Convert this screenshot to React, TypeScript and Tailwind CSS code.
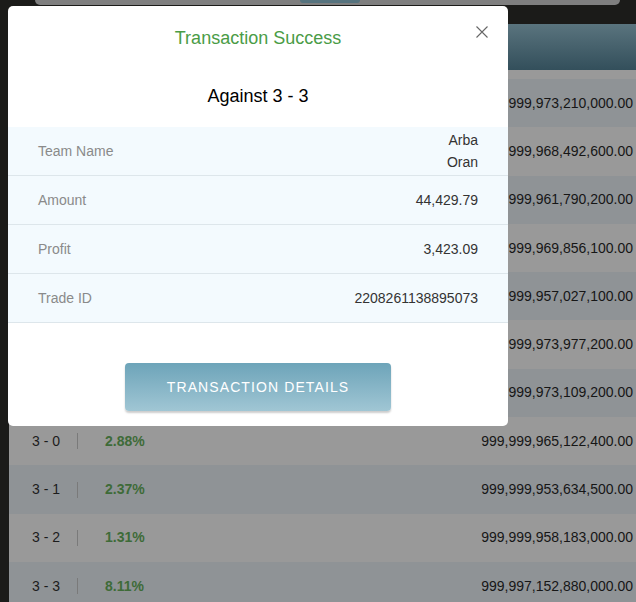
import React from "react";

const rows = [
  { s: "", p: "", v: "999,999,973,210,000.00" },
  { s: "", p: "", v: "999,999,968,492,600.00" },
  { s: "", p: "", v: "999,999,961,790,200.00" },
  { s: "", p: "", v: "999,999,969,856,100.00" },
  { s: "", p: "", v: "999,999,957,027,100.00" },
  { s: "", p: "", v: "999,999,973,977,200.00" },
  { s: "", p: "", v: "999,999,973,109,200.00" },
  { s: "3 - 0", p: "2.88%", v: "999,999,965,122,400.00" },
  { s: "3 - 1", p: "2.37%", v: "999,999,953,634,500.00" },
  { s: "3 - 2", p: "1.31%", v: "999,999,958,183,000.00" },
  { s: "3 - 3", p: "8.11%", v: "999,997,152,880,000.00" },
];

function Row({ s, p, v, i }: { s: string; p: string; v: string; i: number }) {
  return (
    <div
      className={`flex h-[48.3px] shrink-0 items-center pl-[23px] pr-[3px] text-[14px] ${
        i % 2 === 0 ? "bg-[#8f9396]" : "bg-[#999999]"
      }`}
    >
      {s ? (
        <>
          <span className="w-[45px] text-[#1c1c1c]">{s}</span>
          <span className="h-[16px] w-px bg-[#7a7a7a]" />
          <span className="ml-[27px] font-bold text-[#3e6b38]">{p}</span>
        </>
      ) : null}
      <span className="ml-auto text-[#161616]">{v}</span>
    </div>
  );
}

function InfoRow({ label, children }: { label: string; children: React.ReactNode }) {
  return (
    <div className="flex h-[49px] items-center justify-between border-b border-[#dde6eb] pl-[30px] pr-[30px] text-[14px]">
      <span className="text-[#8a8a8a]">{label}</span>
      <div className="text-right text-[#333333]">{children}</div>
    </div>
  );
}

export default function App() {
  return (
    <div className="relative h-[602px] w-[636px] overflow-hidden bg-[#1b1b19] font-['Liberation_Sans',Arial,sans-serif]">
      {/* top strip */}
      <div className="h-[24px]">
        <div className="relative ml-[35px] mr-[16px] h-[5px] rounded-b-[8px] bg-[#7f7f7f]">
          <div className="absolute left-[265px] top-0 h-[3px] w-[60px] rounded-b-[6px] bg-[#56737e]" />
        </div>
      </div>

      {/* underlying table */}
      <div className="ml-[9px] flex flex-col">
        <div className="h-[46px] bg-gradient-to-b from-[#5a747e] to-[#334f5b]" />
        <div className="h-[9px] bg-[#999999]" />
        {rows.map((r, i) => (
          <Row key={i} i={i} {...r} />
        ))}
      </div>

      {/* modal */}
      <div className="absolute left-[8px] top-[6px] flex h-[420px] w-[500px] flex-col rounded-[5px] bg-white">
        <div className="relative flex h-[64px] items-center justify-center">
          <span className="text-[18px] font-medium leading-[24px] text-[#4a9c46]">Transaction Success</span>
          <svg
            className="absolute right-[20px] top-[20px]"
            width="12"
            height="12"
            viewBox="0 0 12 12"
            fill="none"
            stroke="#666"
            strokeWidth="1.1"
          >
            <path d="M0.5 0.5 L11.5 11.5 M11.5 0.5 L0.5 11.5" />
          </svg>
        </div>
        <div className="h-[57px] pt-[14px] text-center text-[18px] leading-[24px] text-black">Against 3 - 3</div>
        <div className="bg-[#f3fafe]">
          <InfoRow label="Team Name">
            <div className="leading-[22px]">Arba</div>
            <div className="leading-[22px]">Oran</div>
          </InfoRow>
          <InfoRow label="Amount">44,429.79</InfoRow>
          <InfoRow label="Profit">3,423.09</InfoRow>
          <InfoRow label="Trade ID">2208261138895073</InfoRow>
        </div>
        <div className="flex justify-center pt-[40px]">
          <button className="h-[48px] w-[266px] rounded-[4px] bg-gradient-to-b from-[#6da4b9] to-[#a0c6d4] text-[14px] font-medium tracking-[1.1px] text-white shadow-[0_2px_2px_rgba(0,0,0,0.2)]">
            TRANSACTION DETAILS
          </button>
        </div>
      </div>
    </div>
  );
}
